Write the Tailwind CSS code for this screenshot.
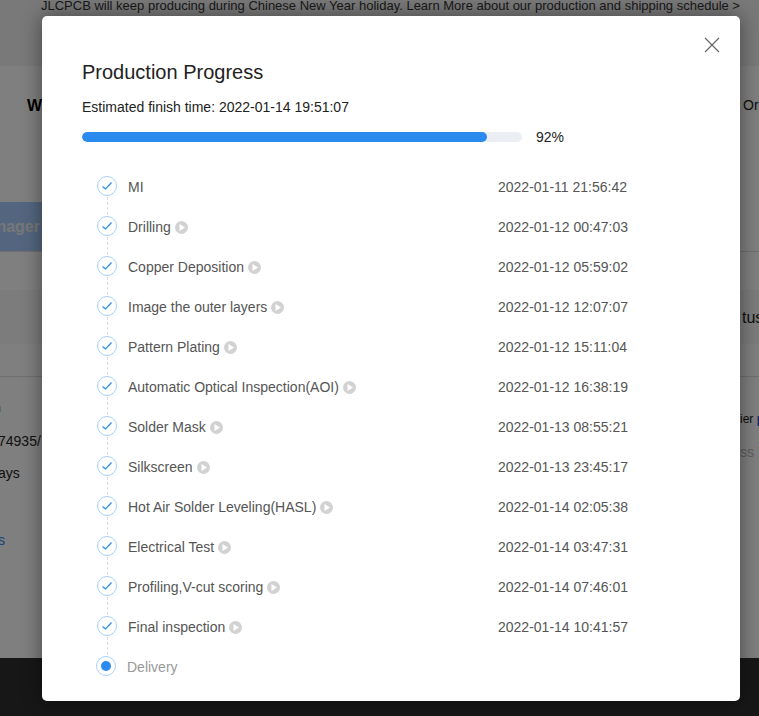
<!DOCTYPE html>
<html lang="en">

<head>
    <meta charset="UTF-8">
    <title>Production Progress | JLCPCB</title>
    <script src="https://cdn.jsdelivr.net/npm/@tailwindcss/browser@4"></script>
</head>

<body class="relative w-[759px] h-[716px] overflow-hidden bg-white font-['Liberation_Sans',Arial,sans-serif] text-[14px] text-[#222]">

    <!-- page behind the dialog -->
    <div class="h-[716px] flex flex-col">
        <div class="h-[66px] bg-[#f2f2f2] pl-[41px] text-[13px] leading-[11px] text-[#333] whitespace-nowrap">JLCPCB will keep producing during Chinese New Year holiday. Learn More about our production and shipping schedule &gt;</div>
        <div class="h-[136px] flex justify-between pl-[27px] pt-[28px] whitespace-nowrap overflow-hidden">
            <span class="font-bold text-[16px] text-black">W</span>
            <span class="text-[14px] pt-[1px] -mr-[12px] w-[28px]">Or</span>
        </div>
        <div class="h-[50px] w-full flex border-b border-[#ddd]">
            <div class="w-[42px] pr-[2px] bg-[#a8ccff] overflow-hidden flex items-center justify-end font-bold text-[16px] text-[#eee]">nager</div>
        </div>
        <div class="h-[92px] bg-[#f9f9f9] border-t-[38px] border-white flex justify-end items-center whitespace-nowrap overflow-hidden">
            <span class="w-[17px] pt-[2px] text-[16px] overflow-hidden">tus</span>
        </div>
        <div class="h-[33px] border-b border-[#ddd]"></div>
        <div class="h-[281px] flex justify-between whitespace-nowrap overflow-hidden">
            <div class="w-[42px] overflow-hidden pt-[26px] text-[14px]">
                <div class="h-[28px] w-[1px] pt-[3px]"><div class="h-[6px] bg-[#b5dcf5]"></div></div>
                <div class="h-[32px] -ml-[2px]">74935/</div>
                <div class="h-[67px] -ml-[2px]">ays</div>
                <div class="-ml-[5px] text-[#2b8aed]">ls</div>
            </div>
            <div class="w-[19px] overflow-hidden pt-[33px] text-[12px]">
                <div class="h-[32px]">ier <span class="font-bold text-[#1d4ed8]">p</span></div>
                <div class="text-[14px] text-[#bbb]">ss '</div>
            </div>
        </div>
        <div class="h-[58px] bg-[#2e2e2e]"></div>
    </div>

    <!-- backdrop -->
    <div class="absolute inset-0 bg-black/50"></div>

    <!-- dialog -->
    <div class="absolute left-[42px] top-[16px] w-[698px] h-[685px] bg-white rounded-[5px] shadow-[0_0_20px_rgba(0,0,0,0.45)] pl-[40px] pt-[44px]">
        <button class="absolute right-[20px] top-[21px] w-[16px] h-[16px] text-[#666]">
            <svg viewBox="0 0 16 16" class="w-[16px] h-[16px]" fill="none" stroke="currentColor" stroke-width="1.2"><path d="M1 1 15 15M15 1 1 15"/></svg>
        </button>

        <h2 class="text-[20px] leading-[24px] text-[#222]">Production Progress</h2>
        <p class="mt-[13px] leading-[20px] text-[#222]">Estimated finish time: 2022-01-14 19:51:07</p>

        <div class="mt-[10px] flex items-center h-[20px]">
            <div class="w-[440px] h-[10px] rounded-full bg-[#ebeef2] overflow-hidden">
                <div class="h-full rounded-full bg-[#2b8aed]" style="width: 92%"></div>
            </div>
            <span class="ml-[14px] text-[#222]">92%</span>
        </div>

        <ul id="steps" class="mt-[20px] pl-[15px] text-[#555]">
            <li class="h-[40px] flex items-center relative text-[#999]" id="last-step">
                <span class="-ml-[1px] -mt-[2px] w-[20px] h-[20px] rounded-full border border-[#a8d1fb] flex items-center justify-center"><span class="w-[10px] h-[10px] rounded-full bg-[#2b8aed]"></span></span>
                <span class="ml-[11px]">Delivery</span>
            </li>
        </ul>
    </div>

    <script>
        const finished = [
            ['MI', '2022-01-11 21:56:42', false],
            ['Drilling', '2022-01-12 00:47:03', true],
            ['Copper Deposition', '2022-01-12 05:59:02', true],
            ['Image the outer layers', '2022-01-12 12:07:07', true],
            ['Pattern Plating', '2022-01-12 15:11:04', true],
            ['Automatic Optical Inspection(AOI)', '2022-01-12 16:38:19', true],
            ['Solder Mask', '2022-01-13 08:55:21', true],
            ['Silkscreen', '2022-01-13 23:45:17', true],
            ['Hot Air Solder Leveling(HASL)', '2022-01-14 02:05:38', true],
            ['Electrical Test', '2022-01-14 03:47:31', true],
            ['Profiling,V-cut scoring', '2022-01-14 07:46:01', true],
            ['Final inspection', '2022-01-14 10:41:57', true],
        ];

        const playIcon = '<svg viewBox="0 0 13 13" class="w-[13px] h-[13px]"><circle cx="6.5" cy="6.5" r="6.5" fill="#d2d2d2"/><path d="M4.5 3 10 6.5 4.5 10Z" fill="#fff"/></svg>';
        const lastStep = document.getElementById('last-step');

        finished.forEach(([name, time, hasVideo]) => {
            const li = document.createElement('li');
            li.className = 'h-[40px] flex items-center relative';
            li.innerHTML = `
                <span class="-mt-[2px] w-[20px] h-[20px] rounded-full border border-[#a8d1fb] flex items-center justify-center"><svg viewBox="0 0 10 10" class="w-[10px] h-[10px]" fill="none" stroke="#2b8aed" stroke-width="1.2"><path d="M0.5 5.5 3.5 8 9.5 1.5"/></svg></span>
                <span class="absolute left-[10px] top-[30px] h-[18px] border-l border-dashed border-[#dcdcdc]"></span>
                <span class="ml-[11px] w-[370px] flex items-center gap-[4px]">${name} ${hasVideo ? playIcon : ''}</span><span>${time}</span>`;
            lastStep.before(li);
        });
    </script>
</body>

</html>
